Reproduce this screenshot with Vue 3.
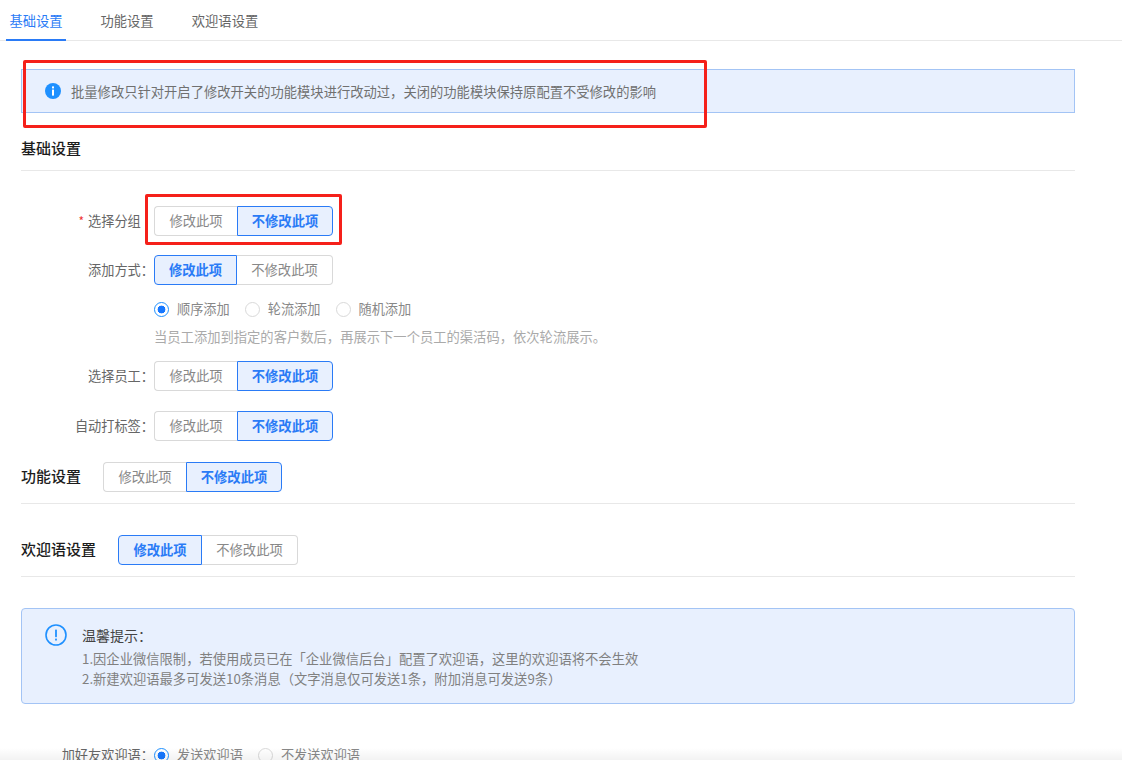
<script setup>
const colon = '\uFF1A'
const rows = [
  { label: '选择分组', req: true, on: 1 },
  { label: '添加方式' + colon, on: 0 },
]
const rows2 = [
  { label: '选择员工' + colon, on: 1 },
  { label: '自动打标签' + colon, on: 1 },
]
const opts = ['修改此项', '不修改此项']
</script>

<template>
  <div class="page">
    <div class="tabs">
      <div class="tab active">基础设置</div>
      <div class="tab t2">功能设置</div>
      <div class="tab t3">欢迎语设置</div>
    </div>

    <div class="body">
      <div class="alert">
        <svg class="ai" width="16" height="16" viewBox="0 0 16 16">
          <circle cx="8" cy="8" r="8" fill="#1e90ff" />
          <rect x="7" y="3.4" width="2" height="2" fill="#fff" />
          <rect x="7" y="6.6" width="2" height="6" fill="#fff" />
        </svg>
        <span>批量修改只针对开启了修改开关的功能模块进行改动过&#xFF0C;关闭的功能模块保持原配置不受修改的影响</span>
      </div>

      <div class="title first">基础设置</div>

      <div class="form">
        <div v-for="r in rows" :key="r.label" class="row">
          <div class="label" :class="{ nocolon: r.req }"><i v-if="r.req">*</i>{{ r.label }}</div>
          <div class="seg">
            <div v-for="(o, i) in opts" :key="o" class="btn" :class="[i ? 'b2' : 'b1', { on: r.on === i }]">{{ o }}</div>
          </div>
        </div>
        <div class="radios">
          <label class="radio sel"><b></b>顺序添加</label>
          <label class="radio"><b></b>轮流添加</label>
          <label class="radio"><b></b>随机添加</label>
        </div>
        <div class="help">当员工添加到指定的客户数后&#xFF0C;再展示下一个员工的渠活码&#xFF0C;依次轮流展示。</div>
        <div class="rows2">
          <div v-for="r in rows2" :key="r.label" class="row">
            <div class="label">{{ r.label }}</div>
            <div class="seg">
              <div v-for="(o, i) in opts" :key="o" class="btn" :class="[i ? 'b2' : 'b1', { on: r.on === i }]">{{ o }}</div>
            </div>
          </div>
        </div>
      </div>

      <div class="head h1">
        <div class="title">功能设置</div>
        <div class="seg">
          <div class="btn b1">修改此项</div>
          <div class="btn b2 on">不修改此项</div>
        </div>
      </div>

      <div class="head h2">
        <div class="title">欢迎语设置</div>
        <div class="seg">
          <div class="btn b1 on">修改此项</div>
          <div class="btn b2">不修改此项</div>
        </div>
      </div>

      <div class="tip">
        <svg class="ti" width="22" height="22" viewBox="0 0 22 22">
          <circle cx="11" cy="11" r="10" fill="none" stroke="#1e90ff" stroke-width="1.6" />
          <rect x="10.1" y="5.6" width="1.8" height="7.6" rx=".6" fill="#1e90ff" />
          <rect x="10.1" y="14.6" width="1.8" height="1.9" fill="#1e90ff" />
        </svg>
        <div>
          <div class="tt">温馨提示&#xFF1A;</div>
          <div class="tl">1.因企业微信限制&#xFF0C;若使用成员已在「企业微信后台」配置了欢迎语&#xFF0C;这里的欢迎语将不会生效</div>
          <div class="tl">2.新建欢迎语最多可发送10条消息&#xFF08;文字消息仅可发送1条&#xFF0C;附加消息可发送9条&#xFF09;</div>
        </div>
      </div>

      <div class="last">
        <div class="label">加好友欢迎语&#xFF1A;</div>
        <label class="radio sel"><b></b>发送欢迎语</label>
        <label class="radio"><b></b>不发送欢迎语</label>
      </div>
    </div>

    <div class="red r-a"></div>
    <div class="red r-b"></div>
    <div class="fade-b"></div>
  </div>
</template>

<style scoped>
.page {
  position: relative;
  width: 1122px;
  height: 760px;
  overflow: hidden;
  background: #fff;
  font-family: "Noto Sans CJK SC", "Noto Sans", sans-serif;
  font-size: 13.3px;
  color: #666;
}
.tabs {
  display: flex;
  height: 41px;
  box-sizing: border-box;
  border-bottom: 1px solid #e8e8e8;
  padding-left: 6px;
}
.tab {
  height: 41px;
  box-sizing: border-box;
  line-height: 42px;
  width: 60px;
  text-align: center;
  font-size: 13.3px;
  color: #666;
}
.tab.active {
  color: #2a7bf6;
  border-bottom: 2px solid #2a7bf6;
}
.t2 { margin-left: 31px; }
.t3 { margin-left: 33px; width: 70px; }
.body { padding: 28px 47px 0 21px; }
.alert {
  height: 44px;
  box-sizing: border-box;
  display: flex;
  align-items: center;
  background: #e8f0fe;
  border: 1px solid #a3c4f5;
  padding-left: 23px;
  font-size: 13.3px;
  color: #707070;
}
.ai { margin-right: 10px; flex: none; }
.title {
  font-size: 15px;
  font-weight: 500;
  color: #1c1c1c;
  line-height: 22px;
  white-space: nowrap;
}
.head .title { margin-top: -2px; }
.first {
  margin-top: 24px;
  padding-bottom: 11px;
  border-bottom: 1px solid #e8e8e8;
}
.form { padding-top: 35px; }
.row {
  display: flex;
  align-items: center;
  height: 30px;
  margin-bottom: 19px;
}
.row + .radios { margin-top: -6px; }
.label {
  width: 133px;
  flex: none;
  box-sizing: border-box;
  text-align: right;
  font-size: 13.2px;
  color: #666;
  white-space: nowrap;
}
.row .label { margin-top: -2px; }
.nocolon { padding-right: 13.2px; }
.label i {
  color: #e33;
  font-style: normal;
  margin-right: 4px;
  font-size: 12px;
}
.seg { display: flex; height: 30px; }
.btn {
  box-sizing: border-box;
  height: 30px;
  line-height: 27px;
  text-align: center;
  border: 1px solid #d9d9d9;
  color: #888;
  font-size: 13.3px;
  background: #fff;
  white-space: nowrap;
}
.b1 { width: 83px; border-radius: 4px 0 0 4px; border-right: 0; }
.b2 { width: 96px; border-radius: 0 4px 4px 0; border-left: 0; }
.h2 .b1 { width: 84px; }
.btn.on {
  background: #e8f0fe;
  border: 1px solid #2a7bf6;
  color: #2a7bf6;
  font-weight: 700;
}
.radios {
  display: flex;
  height: 20px;
  align-items: center;
  padding-left: 133px;
}
.radio {
  display: inline-flex;
  align-items: center;
  margin-right: 15px;
  color: #888;
  font-size: 13.2px;
  white-space: nowrap;
}
.radio b {
  width: 15px;
  height: 15px;
  flex: none;
  box-sizing: border-box;
  border: 1px solid #d9d9d9;
  border-radius: 50%;
  margin-right: 8px;
  background: #fff;
  transform: translateY(1px);
}
.radio.sel b {
  border-color: #1e90ff;
  background: radial-gradient(circle, #1677ff 0 3.6px, #fff 4.2px);
}
.help {
  height: 20px;
  line-height: 20px;
  margin-top: 9px;
  margin-bottom: 14px;
  padding-left: 133px;
  font-size: 13.3px;
  color: #aaa;
  white-space: nowrap;
}
.rows2 { display: grid; gap: 20px; }
.rows2 .row { margin-bottom: 0; }
.head {
  display: flex;
  align-items: center;
  gap: 22px;
  border-bottom: 1px solid #e8e8e8;
}
.h1 { margin-top: 21px; padding-bottom: 11px; }
.h2 { margin-top: 31px; padding-bottom: 11px; }
.tip {
  margin-top: 31px;
  height: 96px;
  box-sizing: border-box;
  display: flex;
  background: #e8f0fe;
  border: 1px solid #a3c4f5;
  border-radius: 4px;
  padding: 15px 0 0 23px;
}
.ti { flex: none; margin-right: 15px; }
.tt { font-size: 14px; color: #444; line-height: 22px; margin-bottom: 3px; }
.tl { font-size: 13.3px; color: #808080; line-height: 20px; white-space: nowrap; }
.last {
  display: flex;
  align-items: center;
  margin-top: 40px;
  height: 20px;
}
.red {
  position: absolute;
  box-sizing: border-box;
  border: 3px solid #f5201a;
  border-radius: 2px;
}
.r-a { left: 23px; top: 60px; width: 684px; height: 68px; }
.r-b { left: 145px; top: 194px; width: 197px; height: 51px; }
.fade-b {
  position: absolute;
  left: 0;
  right: 0;
  bottom: 0;
  height: 12px;
  background: linear-gradient(to bottom, rgba(0,0,0,0), rgba(0,0,0,.05));
  pointer-events: none;
}
</style>
